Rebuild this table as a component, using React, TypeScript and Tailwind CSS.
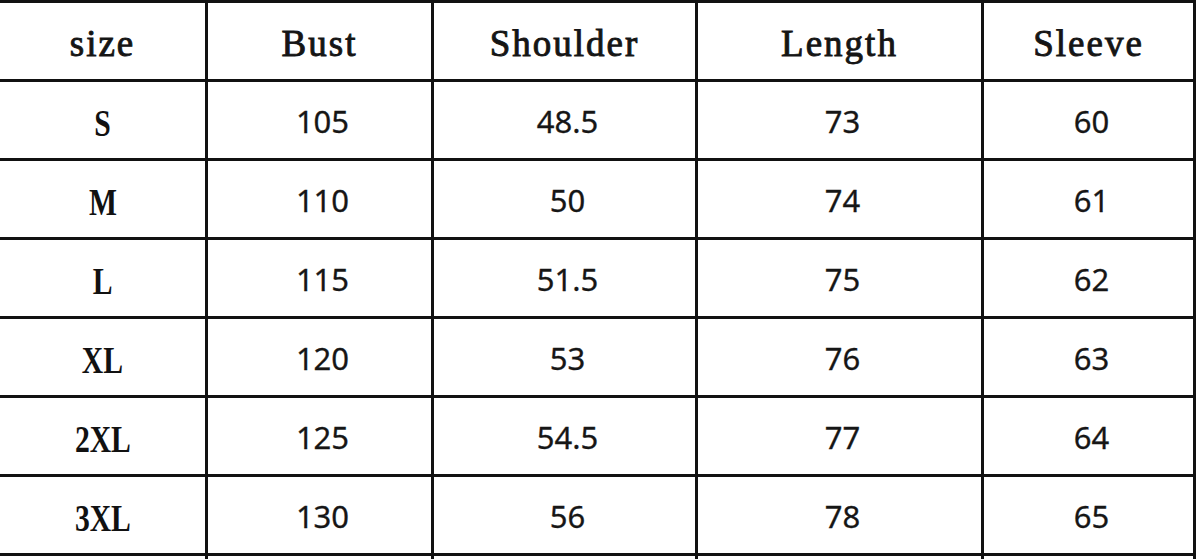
import React from 'react'

const headers = ['size', 'Bust', 'Shoulder', 'Length', 'Sleeve']

const rows = [
  ['S', '105', '48.5', '73', '60'],
  ['M', '110', '50', '74', '61'],
  ['L', '115', '51.5', '75', '62'],
  ['XL', '120', '53', '76', '63'],
  ['2XL', '125', '54.5', '77', '64'],
  ['3XL', '130', '56', '78', '65'],
  ['', '', '', '', ''],
]

export default function App() {
  return (
    <div className="w-[1200px] h-[559px] overflow-hidden bg-white">
      <div className="w-[1196px] border-t-[3px] border-[#111] grid grid-cols-[208px_226px_264px_286px_212px]">
        {/* header row */}
        {headers.map((h) => (
          <div
            key={h}
            className="h-[79px] border-b-[3px] border-r-[3px] border-[#111] flex items-center justify-center pt-[6px]"
          >
            <span
              className="inline-block text-[37px] tracking-[2px] text-[#151515] [-webkit-text-stroke:0.9px_#151515]"
              style={{ fontFamily: '"Liberation Serif", serif' }}
            >
              {h}
            </span>
          </div>
        ))}

        {/* data rows */}
        {rows.map((r, i) =>
          r.map((v, j) => (
            <div
              key={`${i}-${j}`}
              className="h-[79px] border-b-[3px] border-r-[3px] border-[#111] flex items-center justify-center"
            >
              {j === 0 ? (
                <span
                  className="inline-block scale-x-[0.78] text-[38px] font-bold text-[#111] pt-[6px]"
                  style={{ fontFamily: '"Liberation Serif", serif' }}
                >
                  {v}
                </span>
              ) : (
                <span
                  className="text-[31px] text-[#161616] pl-[6px] pt-[2px] [-webkit-text-stroke:0.3px_#161616]"
                  style={{ fontFamily: '"Noto Sans", sans-serif' }}
                >
                  {v}
                </span>
              )}
            </div>
          ))
        )}
      </div>
    </div>
  )
}
